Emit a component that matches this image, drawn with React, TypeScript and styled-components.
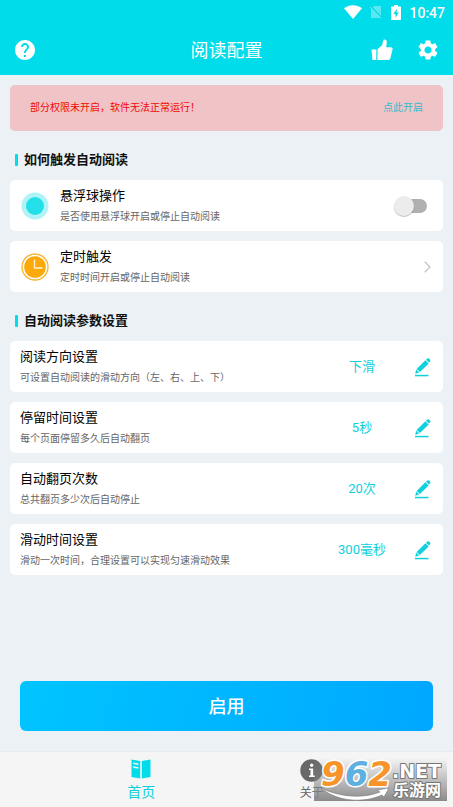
import React, { useState } from "react";
import styled, { createGlobalStyle } from "styled-components";

const CYAN = "#00dce9";
const TEAL = "#10d0dc";

const GlobalStyle = createGlobalStyle`
  *, *::before, *::after { box-sizing: border-box; }
  body {
    margin: 0;
    background: #ebf1f4;
    font-family: Roboto, "Noto Sans CJK SC", sans-serif;
    color: #111;
  }
  button {
    font: inherit;
    color: inherit;
    border: 0;
    padding: 0;
    background: none;
    cursor: pointer;
  }
  h1, h2, h3, p { margin: 0; font-weight: 400; }
  svg { display: block; }
`;

const Page = styled.div`
  display: flex;
  flex-direction: column;
  min-height: 100vh;
`;

const Header = styled.header`
  background: ${CYAN};
  color: #fff;
`;

const StatusBar = styled.div`
  display: flex;
  align-items: center;
  justify-content: flex-end;
  height: 24px;
  padding-right: 8px;
`;

const StatusIcon = styled.svg<{ $gap: number }>`
  margin-right: ${(p) => p.$gap}px;
`;

const Clock = styled.time`
  font-size: 14px;
  font-weight: 500;
  line-height: 24px;
  padding-top: 2px;
`;

const Toolbar = styled.div`
  display: grid;
  grid-template-columns: 1fr auto 1fr;
  align-items: center;
  height: 51px;
  padding: 0 15px;
`;

const ToolbarTitle = styled.h1`
  font-size: 18px;
  line-height: 26px;
  font-family: "Noto Sans CJK SC", sans-serif;
  font-weight: 400;
  padding-bottom: 2px;
`;

const ToolbarActions = styled.div`
  display: flex;
  justify-content: flex-end;
  gap: 25px;
`;

const IconButton = styled.button`
  justify-self: start;
`;

const Main = styled.main`
  flex: 1;
  display: flex;
  flex-direction: column;
  padding: 10px 10px 20px;
`;

const Warning = styled.div`
  display: flex;
  align-items: center;
  justify-content: space-between;
  height: 46px;
  padding: 0 20px;
  border-radius: 5px;
  background: #f0c3c6;
  font-size: 10px;
  line-height: 16px;
  color: #f00a0a;
`;

const WarningLink = styled.a`
  color: #35bdca;
  text-decoration: none;
`;

const Section = styled.section`
  margin-top: 19px;
`;

const SectionTitle = styled.h2`
  display: flex;
  align-items: center;
  gap: 6px;
  margin-bottom: 10px;
  padding-left: 5px;
  font-size: 13px;
  font-weight: 700;
  line-height: 20px;

  &::before {
    content: "";
    width: 3px;
    height: 12px;
    border-radius: 1px;
    background: ${CYAN};
  }
`;

const CardList = styled.div`
  display: flex;
  flex-direction: column;
  gap: 10px;
`;

const Card = styled.div`
  display: flex;
  align-items: center;
  width: 100%;
  padding: 5px 12px 4px 10px;
  border-radius: 5px;
  background: #fff;
  text-align: left;
`;

const CardIcon = styled.span`
  display: flex;
  justify-content: center;
  width: 30px;
  margin-right: 10px;
`;

const CardText = styled.span`
  flex: 1;
  min-width: 0;
`;

const CardTitle = styled.span`
  display: block;
  font-size: 13px;
  line-height: 22px;
  color: #000;
`;

const CardNote = styled.span`
  display: block;
  font-size: 10px;
  line-height: 20px;
  color: #666;
`;

const Value = styled.output`
  width: 100px;
  margin-right: 2px;
  text-align: center;
  font-size: 13px;
  line-height: 22px;
  color: ${TEAL};
`;

const Switch = styled.input`
  appearance: none;
  display: flex;
  align-items: center;
  width: 30px;
  height: 14px;
  margin: 0 4px 0 0;
  border-radius: 7px;
  background: #b0b0b0;
  cursor: pointer;

  &::before {
    content: "";
    flex: none;
    width: 20px;
    height: 20px;
    margin-left: -3px;
    border-radius: 50%;
    background: #ececec;
    box-shadow: 0 1px 1px rgba(0, 0, 0, 0.25);
  }

  &:checked { background: #8beef4; justify-content: flex-end; }
  &:checked::before { background: ${CYAN}; margin-right: -3px; }
`;

const StartButton = styled.button`
  height: 50px;
  margin: auto 10px 0;
  padding-bottom: 2px;
  border-radius: 6px;
  background: linear-gradient(100deg, #00c4ff, #00a8ff);
  color: #fff;
  font-size: 18px;
  font-weight: 500;
`;

const TabBar = styled.nav`
  position: relative;
  display: grid;
  grid-template-columns: 1fr 1fr;
  height: 56px;
  padding: 0 56px;
  border-top: 1px solid #e6ebef;
  background: #f5f5f5;
`;

const Tab = styled.a<{ $active?: boolean }>`
  display: flex;
  flex-direction: column;
  align-items: center;
  padding-top: 7px;
  color: ${(p) => (p.$active ? TEAL : "#686868")};
  font-size: ${(p) => (p.$active ? 14 : 12)}px;
  line-height: 20px;
  text-decoration: none;

  svg { margin-bottom: ${(p) => (p.$active ? 3 : 1)}px; }
`;

const SiteMark = styled.svg`
  position: absolute;
  right: 6px;
  bottom: 6px;
  overflow: visible;
`;

const HelpIcon = () => (
  <svg width="20" height="20" viewBox="2 2 20 20" fill="#fff">
    <path d="M12 2C6.480 2 2 6.480 2 12s4.480 10 10 10 10-4.480 10-10S17.520 2 12 2zm1 17h-2v-2h2v2zm2.070-7.750l-.9.920C13.450 12.900 13 13.500 13 15h-2v-.5c0-1.100.45-2.100 1.170-2.830l1.240-1.260c.37-.36.59-.86.59-1.410 0-1.100-.9-2-2-2s-2 .9-2 2H8c0-2.210 1.790-4 4-4s4 1.790 4 4c0 .88-.36 1.680-.93 2.250z" />
  </svg>
);

const ThumbIcon = () => (
  <svg width="22" height="22" viewBox="0 0 22 22" fill="#fff">
    <path d="M.5 10.500h4.800V21H1.400z" />
    <path d="M6.500 10.200L11.200 6l.8-4.200C12.200.8 13.200.4 14.200.7c1.200.3 1.700 1.100 1.600 2.300l-.6 5.200h4.600c1.500 0 2.100.9 1.800 2.100l-2.200 9c-.3 1.100-1 1.700-2.100 1.700H6.500z" />
  </svg>
);

const GearIcon = () => (
  <svg width="20" height="22" viewBox="2 1 20 22" fill="#fff">
    <path d="M19.140 12.940c.04-.3.06-.61.06-.94 0-.32-.02-.64-.07-.94l2.030-1.580c.18-.14.23-.41.12-.61l-1.920-3.320c-.12-.22-.37-.29-.59-.22l-2.390.96c-.5-.38-1.030-.7-1.620-.94l-.36-2.540c-.04-.24-.24-.41-.48-.41h-3.840c-.24 0-.43.17-.47.41l-.36 2.540c-.59.24-1.130.57-1.620.94l-2.390-.96c-.22-.08-.47 0-.59.22L2.740 8.870c-.12.21-.08.47.12.61l2.030 1.580c-.05.3-.09.63-.09.94s.02.64.07.94l-2.030 1.580c-.18.14-.23.41-.12.61l1.920 3.320c.12.22.37.29.59.22l2.390-.96c.5.38 1.030.7 1.620.94l.36 2.540c.05.24.24.41.48.41h3.840c.24 0 .44-.17.47-.41l.36-2.540c.59-.24 1.130-.56 1.620-.94l2.390.96c.22.08.47 0 .59-.22l1.920-3.320c.12-.22.07-.47-.12-.61l-2.010-1.580zM12 15.600c-1.980 0-3.600-1.620-3.600-3.600s1.620-3.600 3.600-3.600 3.600 1.620 3.600 3.600-1.620 3.600-3.600 3.600z" />
  </svg>
);

const BallIcon = () => (
  <svg width="28" height="28" viewBox="0 0 28 28">
    <circle cx="14" cy="14" r="13.500" fill="#b0f3f7" />
    <circle cx="14" cy="14" r="9" fill="#22dfea" />
  </svg>
);

const ClockIcon = () => (
  <svg width="28" height="28" viewBox="0 0 28 28">
    <circle cx="14" cy="14" r="13" fill="#fff" stroke="#f9b233" strokeWidth="1.300" />
    <circle cx="14" cy="14" r="10.800" fill="#fca90a" />
    <path d="M13.500 6.500v8.500h8" fill="none" stroke="#fff1cf" strokeWidth="1.400" />
  </svg>
);

const ChevronIcon = () => (
  <svg width="7" height="12" viewBox="0 0 7 12" fill="none" stroke="#c4c4c4" strokeWidth="1.300">
    <path d="M.7.700L6 6 .7 11.300" />
  </svg>
);

const PencilIcon = () => (
  <svg width="17" height="19" viewBox="0 0 17 19" fill={TEAL}>
    <path d="M12 1.700l.9-.9c.8-.8 1.700-.7 2.500 0l.4.400c.8.800.8 1.700 0 2.500l-.8.900z" />
    <path d="M11.400 2.200l3.300 3.200-8.800 8.700-3.300-3.200z" />
    <path d="M2.100 11.600l3.100 3-3.900 1.200z" />
    <path d="M1 16.800h13.500v1.500H1z" />
  </svg>
);

const BookIcon = () => (
  <svg width="20" height="20" viewBox="0 0 20 20">
    <path d="M.5.500L9.200 2v17.500L.5 18z" fill={CYAN} />
    <path d="M19.500.500L10.800 2v17.500l8.700-1.500z" fill={CYAN} />
    <path d="M2 4.200l5.500 1M2 8l5.500 1" stroke="#f5f5f5" strokeWidth="1.400" />
  </svg>
);

const InfoIcon = () => (
  <svg width="23" height="23" viewBox="0 0 23 23">
    <circle cx="11.500" cy="11.500" r="11.200" fill="#686868" />
    <circle cx="11.700" cy="6.300" r="1.700" fill="#fff" />
    <path d="M9 9.500h4.200v7H15V18H9v-1.500h1.500V11H9z" fill="#fff" />
  </svg>
);

const StatusIcons = () => (
  <>
    <StatusIcon $gap={8} width="18" height="14" viewBox="0 0 18 14" fill="#fff">
      <path d="M0 3.200C5-.8 13-.8 18 3.200L9 14z" />
    </StatusIcon>
    <StatusIcon $gap={9} width="12" height="14" viewBox="0 0 12 14">
      <path d="M4 1h7v12H1V4z" fill="#fff" opacity=".35" />
      <path d="M0 1l12 12.500" stroke={CYAN} strokeWidth="2" />
      <path d="M0 2l11 11.500" stroke="#fff" strokeWidth="1" opacity=".5" />
    </StatusIcon>
    <StatusIcon $gap={8} width="10" height="15" viewBox="0 0 10 15">
      <path d="M3 0h4v1.500h2c.6 0 1 .4 1 1V14c0 .6-.4 1-1 1H1c-.6 0-1-.4-1-1V2.500c0-.6.4-1 1-1h2z" fill="#fff" />
      <path d="M6 3.800L2.300 9h2.200v3.700L7.800 7.500H5.600z" fill={CYAN} />
    </StatusIcon>
  </>
);

const SiteLogo = () => (
  <SiteMark width="133" height="43" viewBox="0 0 133 43" role="img" aria-label="962.NET 乐游网">
    <defs>
      <linearGradient id="plate" x1="0" y1="0" x2="0" y2="1">
        <stop offset="0" stopColor="#858585" stopOpacity="0" />
        <stop offset="1" stopColor="#858585" stopOpacity=".95" />
      </linearGradient>
    </defs>
    <rect width="133" height="43" fill="url(#plate)" />
    <path d="M7 30c18 9 42 11 59 4l-3-2 12-2-5 9-2-2C48 46 22 43 7 30z" fill="#fff" stroke="#777" strokeWidth=".6" />
    <g fontFamily="DejaVu Sans" fontWeight="700" strokeLinejoin="round" paintOrder="stroke">
      <text x="7" y="28" fontSize="34" fontStyle="italic" stroke="#fff" strokeWidth="3">
        <tspan fill="#f7942a">9</tspan><tspan fill="#5fb0e2">6</tspan><tspan fill="#f7942a">2</tspan>
      </text>
      <text x="78" y="20" fontSize="19" fill="#fff" stroke="#777" strokeWidth="2">.NET</text>
    </g>
    <text x="79" y="38" fontSize="16" fontFamily="Noto Sans CJK SC" fontWeight="700" fill="#fff" stroke="#777" strokeWidth="2" strokeLinejoin="round" paintOrder="stroke">乐游网</text>
  </SiteMark>
);

const SETTINGS = [
  { title: "阅读方向设置", note: "可设置自动阅读的滑动方向（左、右、上、下）", value: "下滑" },
  { title: "停留时间设置", note: "每个页面停留多久后自动翻页", value: "5秒" },
  { title: "自动翻页次数", note: "总共翻页多少次后自动停止", value: "20次" },
  { title: "滑动时间设置", note: "滑动一次时间，合理设置可以实现匀速滑动效果", value: "300毫秒" },
];

export default function App() {
  const [floating, setFloating] = useState(false);

  return (
    <Page lang="zh-CN">
      <GlobalStyle />
      <Header>
        <StatusBar>
          <StatusIcons />
          <Clock>10:47</Clock>
        </StatusBar>
        <Toolbar>
          <IconButton type="button" aria-label="帮助"><HelpIcon /></IconButton>
          <ToolbarTitle>阅读配置</ToolbarTitle>
          <ToolbarActions>
            <IconButton type="button" aria-label="点赞"><ThumbIcon /></IconButton>
            <IconButton type="button" aria-label="设置"><GearIcon /></IconButton>
          </ToolbarActions>
        </Toolbar>
      </Header>

      <Main>
        <Warning role="alert">
          <p>部分权限未开启，软件无法正常运行！</p>
          <WarningLink href="#permissions">点此开启</WarningLink>
        </Warning>

        <Section>
          <SectionTitle>如何触发自动阅读</SectionTitle>
          <CardList>
            <Card as="label">
              <CardIcon><BallIcon /></CardIcon>
              <CardText>
                <CardTitle>悬浮球操作</CardTitle>
                <CardNote>是否使用悬浮球开启或停止自动阅读</CardNote>
              </CardText>
              <Switch
                type="checkbox"
                role="switch"
                checked={floating}
                onChange={(e) => setFloating(e.target.checked)}
              />
            </Card>
            <Card as="button" type="button">
              <CardIcon><ClockIcon /></CardIcon>
              <CardText>
                <CardTitle>定时触发</CardTitle>
                <CardNote>定时时间开启或停止自动阅读</CardNote>
              </CardText>
              <ChevronIcon />
            </Card>
          </CardList>
        </Section>

        <Section>
          <SectionTitle>自动阅读参数设置</SectionTitle>
          <CardList>
            {SETTINGS.map((s) => (
              <Card key={s.title}>
                <CardText>
                  <CardTitle>{s.title}</CardTitle>
                  <CardNote>{s.note}</CardNote>
                </CardText>
                <Value>{s.value}</Value>
                <IconButton type="button" aria-label={`修改${s.title}`}><PencilIcon /></IconButton>
              </Card>
            ))}
          </CardList>
        </Section>

        <StartButton type="button">启用</StartButton>
      </Main>

      <TabBar>
        <Tab href="#home" $active aria-current="page"><BookIcon />首页</Tab>
        <Tab href="#about"><InfoIcon />关于</Tab>
        <SiteLogo />
      </TabBar>
    </Page>
  );
}
